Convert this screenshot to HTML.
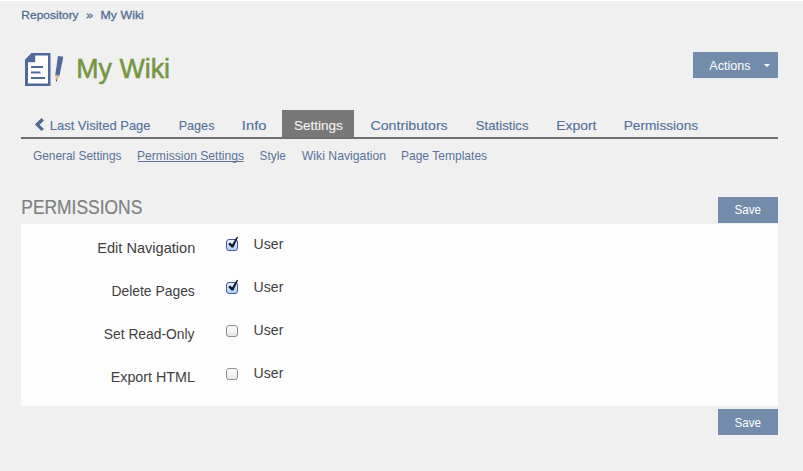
<!DOCTYPE html>
<html><head><meta charset="utf-8">
<style>
html,body{margin:0;padding:0;}
body{width:803px;height:471px;background:#f0f0f0;position:relative;overflow:hidden;font-family:"Liberation Sans",sans-serif;}
.a{position:absolute;}
svg text{font-family:"Liberation Sans",sans-serif;}
</style></head><body>
<div class="a" style="left:0;top:0;width:803px;height:1px;background:#ffffff;"></div>
<!-- buttons / panels -->
<div class="a" style="left:693px;top:52px;width:85px;height:26px;background:#738cab;"></div>
<div class="a" style="left:282px;top:110px;width:72px;height:27px;background:#787878;"></div>
<div class="a" style="left:21px;top:137px;width:757px;height:2px;background:#707070;"></div>
<div class="a" style="left:718px;top:197px;width:60px;height:26px;background:#738cab;"></div>
<div class="a" style="left:21px;top:224px;width:757px;height:182px;background:#fdfdfd;"></div>
<div class="a" style="left:718px;top:409px;width:60px;height:26px;background:#738cab;"></div>
<svg class="a" style="left:0;top:0" width="803" height="471" viewBox="0 0 803 471">
  <!-- logo -->
  <path d="M25 59.5 L31.5 53 L50.5 53 L50.5 86 L25 86 Z" fill="#4f6a98"/>
  <path d="M35.2 55.5 L48 55.5 L48 83.5 L28 83.5 L28 62.2 L35.2 62.2 Z" fill="#fff"/>
  <rect x="31" y="66" width="12" height="2" fill="#4f6a98"/>
  <rect x="31" y="71.5" width="9.5" height="2" fill="#4f6a98"/>
  <rect x="31" y="77" width="14" height="2" fill="#4f6a98"/>
  <path d="M58 56 L63.3 56.7 L59.5 75.8 L55.2 75.2 Z" fill="#4f6a98"/>
  <path d="M55.2 75.2 L59.5 75.8 L56.4 81.8 Z" fill="#d9b98c"/>
  <path d="M55.7 79.5 L57.3 79.8 L56.4 81.8 Z" fill="#333"/>
  <!-- caret -->
  <path d="M764 64 L770 64 L767 67 Z" fill="#fff"/>
  <!-- chevron -->
  <path d="M41.45 118 L44 120.5 L39.6 124.75 L44 129 L41.45 131.1 L34.9 124.6 Z" fill="#4f6b96"/>
  <!-- underline -->
  <rect x="138" y="161" width="105.6" height="1" fill="#5a7399"/>
  <defs>
<linearGradient id="gb" x1="0" y1="0" x2="0" y2="1"><stop offset="0" stop-color="#e4f2ff"/><stop offset="1" stop-color="#a9d2f6"/></linearGradient>
<linearGradient id="gg" x1="0" y1="0" x2="0" y2="1"><stop offset="0" stop-color="#ffffff"/><stop offset="1" stop-color="#e6e6e6"/></linearGradient>
</defs>
<!-- checkboxes -->
<rect x="226.5" y="239.5" width="11" height="11" rx="2.5" fill="url(#gb)" stroke="#4f5697" stroke-width="1"/>
<path d="M228.50 243.70 L230.20 242.60 L232.10 244.60 L236.40 237.40 L237.60 236.70 L238.00 237.60 L233.40 247.40 L231.60 247.40 L228.50 244.60 Z" fill="#0f1830"/>
<rect x="226.5" y="282.5" width="11" height="11" rx="2.5" fill="url(#gb)" stroke="#4f5697" stroke-width="1"/>
<path d="M228.50 286.70 L230.20 285.60 L232.10 287.60 L236.40 280.40 L237.60 279.70 L238.00 280.60 L233.40 290.40 L231.60 290.40 L228.50 287.60 Z" fill="#0f1830"/>
<rect x="226.5" y="325.5" width="11" height="11" rx="2.5" fill="url(#gg)" stroke="#8f8f8f" stroke-width="1"/>
<rect x="226.5" y="368.5" width="11" height="11" rx="2.5" fill="url(#gg)" stroke="#8f8f8f" stroke-width="1"/>

<text x="21.32" y="18.8" font-size="11.8" fill="#4f6c94" textLength="57.31" lengthAdjust="spacingAndGlyphs" stroke="#4f6c94" stroke-width="0.3">Repository</text>
<text x="85.98" y="18.8" font-size="11.8" fill="#4f6c94" textLength="7.14" lengthAdjust="spacingAndGlyphs" stroke="#4f6c94" stroke-width="0.3">»</text>
<text x="100.59" y="18.8" font-size="11.8" fill="#4f6c94" textLength="43.25" lengthAdjust="spacingAndGlyphs" stroke="#4f6c94" stroke-width="0.3">My Wiki</text>
<text x="76.30" y="78" font-size="28" fill="#76963f" textLength="93.70" lengthAdjust="spacingAndGlyphs" stroke="#76963f" stroke-width="0.55">My Wiki</text>
<text x="709.28" y="69.7" font-size="13" fill="#ffffff" textLength="41.18" lengthAdjust="spacingAndGlyphs">Actions</text>
<text x="49.73" y="129.7" font-size="13.6" fill="#52709b" textLength="100.84" lengthAdjust="spacingAndGlyphs" stroke="#52709b" stroke-width="0.12">Last Visited Page</text>
<text x="178.66" y="129.7" font-size="13.6" fill="#52709b" textLength="35.79" lengthAdjust="spacingAndGlyphs" stroke="#52709b" stroke-width="0.12">Pages</text>
<text x="241.83" y="129.7" font-size="13.6" fill="#52709b" textLength="24.69" lengthAdjust="spacingAndGlyphs" stroke="#52709b" stroke-width="0.12">Info</text>
<text x="293.89" y="129.7" font-size="13.6" fill="#f2f2f2" textLength="48.90" lengthAdjust="spacingAndGlyphs" stroke="#f2f2f2" stroke-width="0.12">Settings</text>
<text x="370.48" y="129.7" font-size="13.6" fill="#52709b" textLength="77.23" lengthAdjust="spacingAndGlyphs" stroke="#52709b" stroke-width="0.12">Contributors</text>
<text x="475.70" y="129.7" font-size="13.6" fill="#52709b" textLength="52.88" lengthAdjust="spacingAndGlyphs" stroke="#52709b" stroke-width="0.12">Statistics</text>
<text x="556.15" y="129.7" font-size="13.6" fill="#52709b" textLength="40.35" lengthAdjust="spacingAndGlyphs" stroke="#52709b" stroke-width="0.12">Export</text>
<text x="623.78" y="129.7" font-size="13.6" fill="#52709b" textLength="74.31" lengthAdjust="spacingAndGlyphs" stroke="#52709b" stroke-width="0.12">Permissions</text>
<text x="32.90" y="160" font-size="12.6" fill="#5a7399" textLength="88.63" lengthAdjust="spacingAndGlyphs">General Settings</text>
<text x="137.01" y="160" font-size="12.6" fill="#5a7399" textLength="107.03" lengthAdjust="spacingAndGlyphs">Permission Settings</text>
<text x="259.56" y="160" font-size="12.6" fill="#5a7399" textLength="26.37" lengthAdjust="spacingAndGlyphs">Style</text>
<text x="301.75" y="160" font-size="12.6" fill="#5a7399" textLength="84.45" lengthAdjust="spacingAndGlyphs">Wiki Navigation</text>
<text x="400.91" y="160" font-size="12.6" fill="#5a7399" textLength="86.22" lengthAdjust="spacingAndGlyphs">Page Templates</text>
<text x="21.27" y="214" font-size="20.2" fill="#808080" textLength="121.03" lengthAdjust="spacingAndGlyphs" stroke="#808080" stroke-width="0.2">PERMISSIONS</text>
<text x="734.47" y="214" font-size="13" fill="#ffffff" textLength="26.55" lengthAdjust="spacingAndGlyphs">Save</text>
<text x="734.47" y="427" font-size="13" fill="#ffffff" textLength="26.55" lengthAdjust="spacingAndGlyphs">Save</text>
<text x="97.31" y="253" font-size="15" fill="#3f3f3f" textLength="97.94" lengthAdjust="spacingAndGlyphs">Edit Navigation</text>
<text x="111.46" y="296" font-size="15" fill="#3f3f3f" textLength="83.34" lengthAdjust="spacingAndGlyphs">Delete Pages</text>
<text x="103.77" y="339" font-size="15" fill="#3f3f3f" textLength="90.76" lengthAdjust="spacingAndGlyphs">Set Read-Only</text>
<text x="110.73" y="382" font-size="15" fill="#3f3f3f" textLength="84.25" lengthAdjust="spacingAndGlyphs">Export HTML</text>
<text x="253.61" y="249" font-size="15" fill="#3f3f3f" textLength="29.72" lengthAdjust="spacingAndGlyphs">User</text>
<text x="253.61" y="292" font-size="15" fill="#3f3f3f" textLength="29.72" lengthAdjust="spacingAndGlyphs">User</text>
<text x="253.61" y="335" font-size="15" fill="#3f3f3f" textLength="29.72" lengthAdjust="spacingAndGlyphs">User</text>
<text x="253.61" y="378" font-size="15" fill="#3f3f3f" textLength="29.72" lengthAdjust="spacingAndGlyphs">User</text>
</svg>
</body></html>
